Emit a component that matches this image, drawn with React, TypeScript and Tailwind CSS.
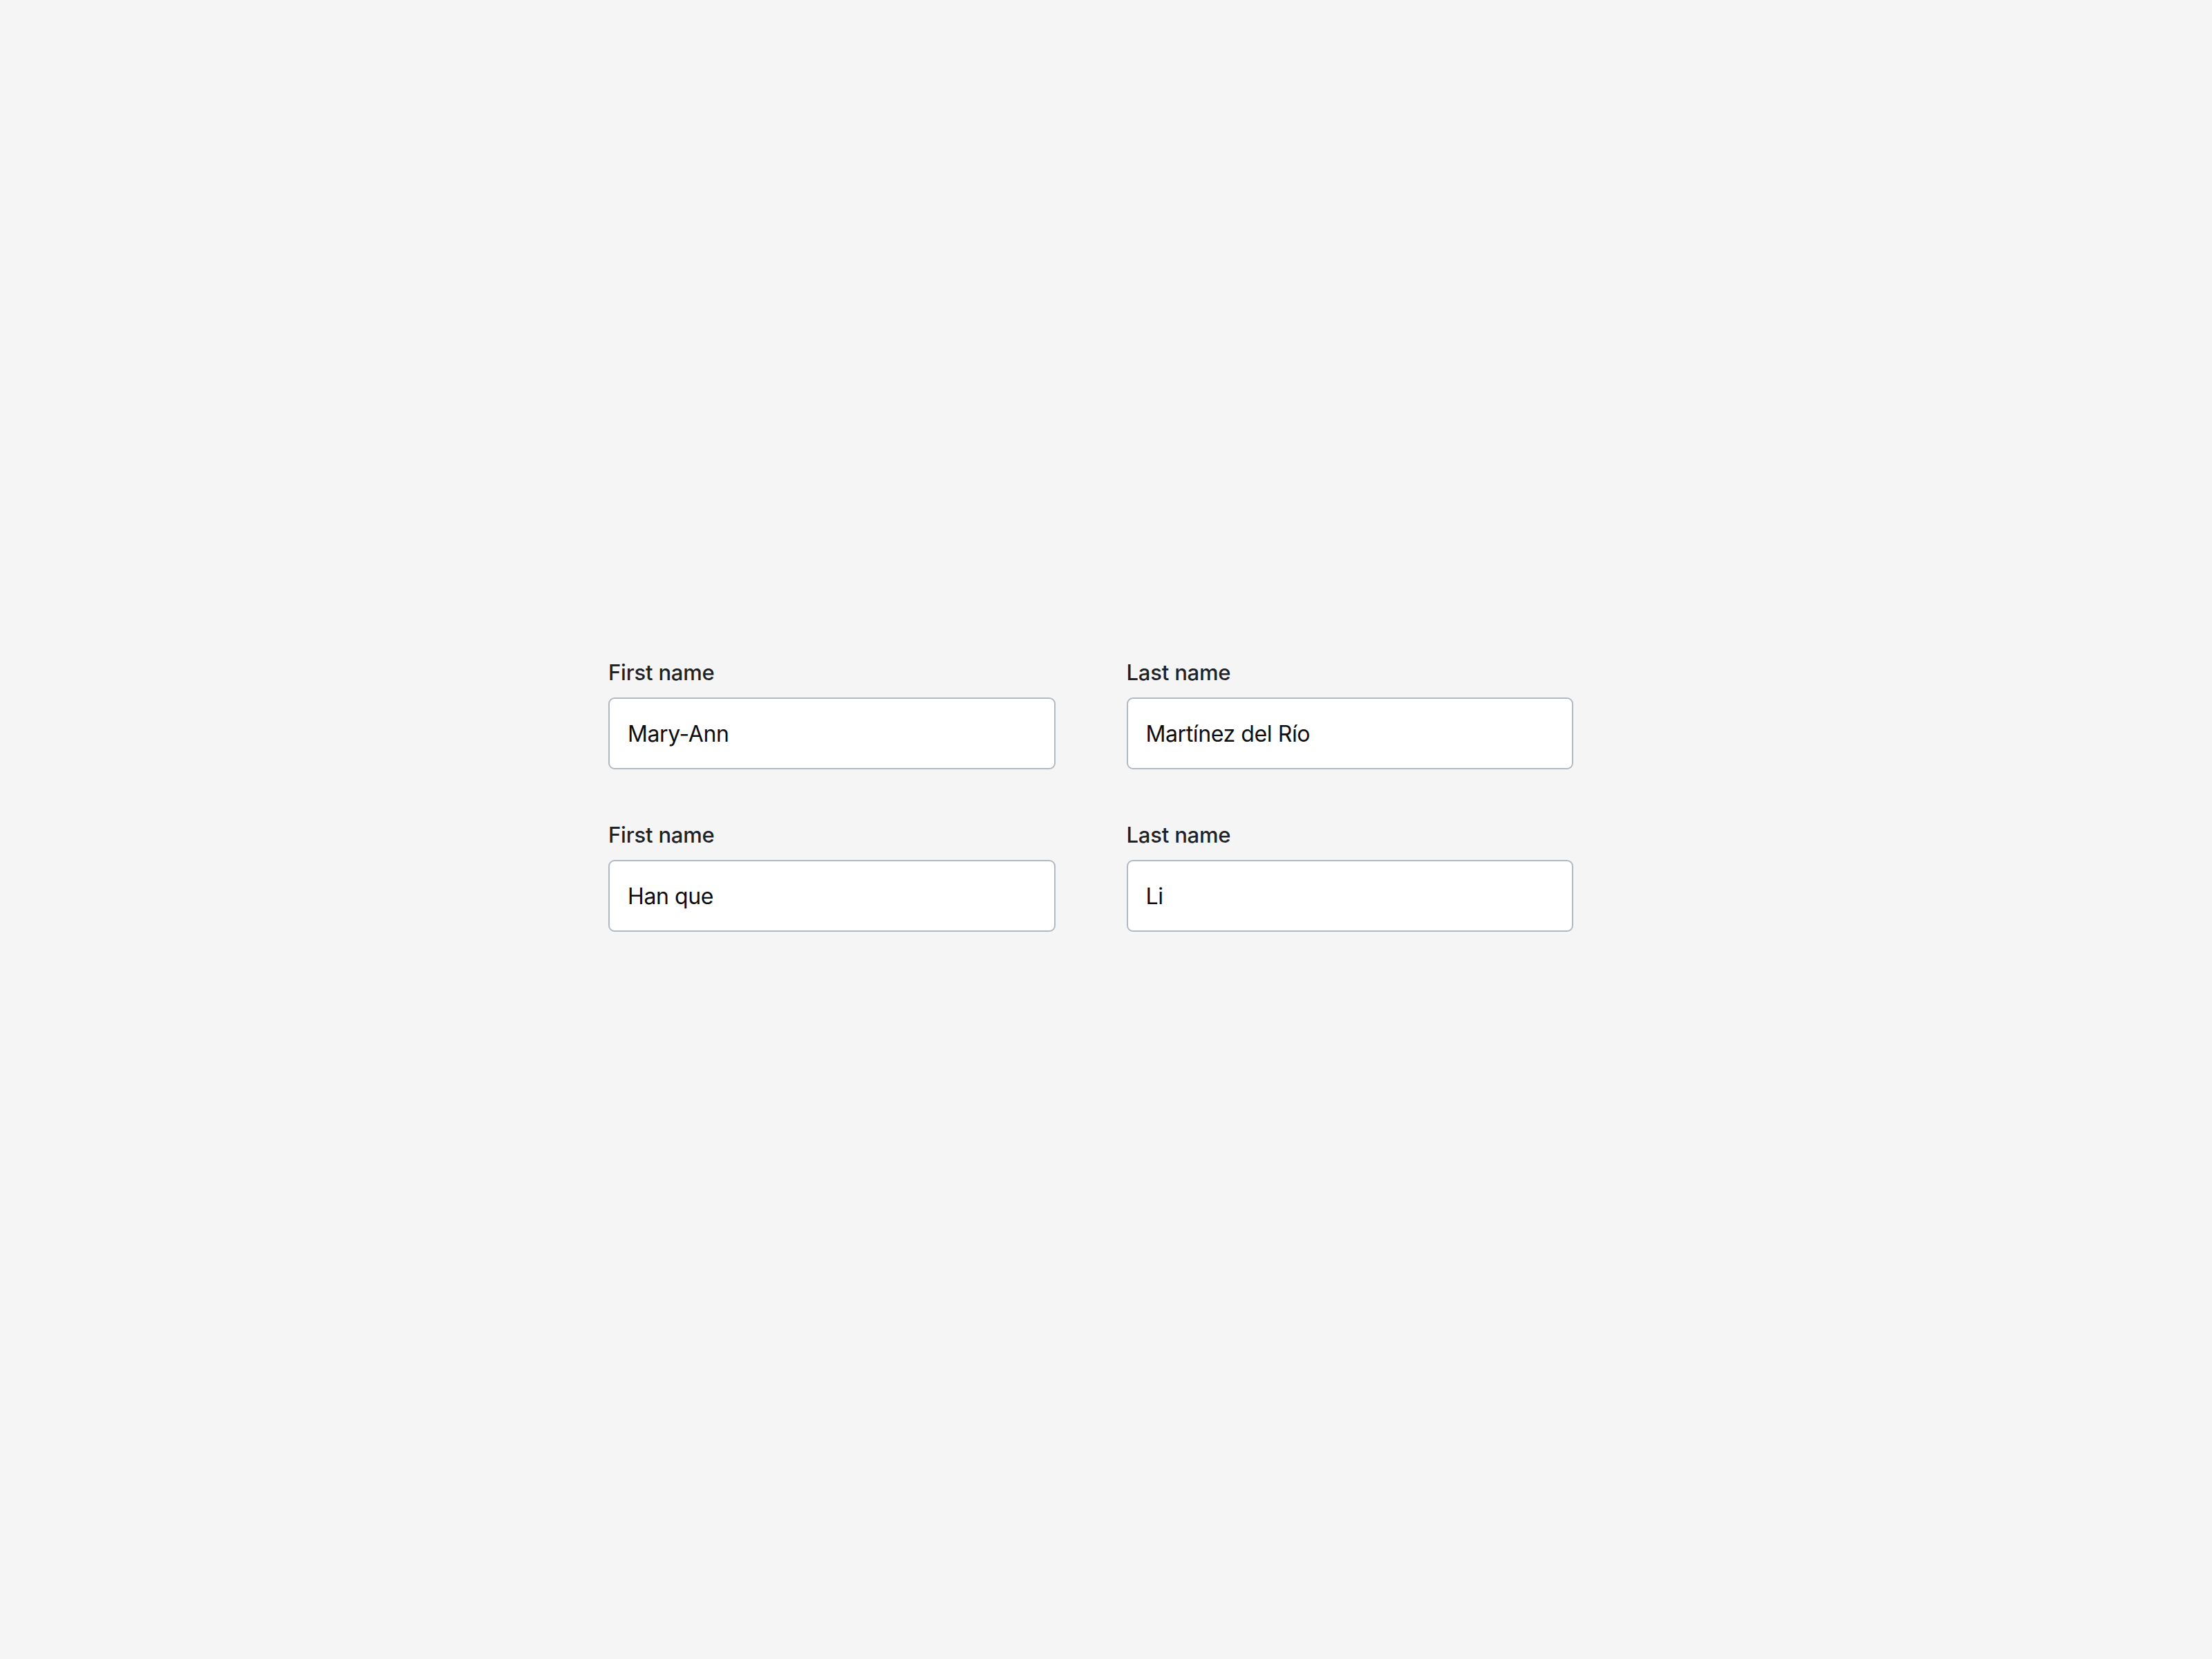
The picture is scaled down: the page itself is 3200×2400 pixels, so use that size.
import React from "react";

const rows = [
  { first: "Mary-Ann", last: "Martínez del Río" },
  { first: "Han que", last: "Li" },
];

function Field({ label, value }: { label: string; value: string }) {
  return (
    <label className="flex flex-col gap-[16px]">
      <span className="text-[31px] leading-[40px] font-medium tracking-[-0.2px] text-[#1f2328]">{label}</span>
      <input
        readOnly
        value={value}
        className="h-[104px] w-full rounded-[9px] border-2 border-[#b2b9c1] bg-white px-[26px] text-[32px] tracking-[-0.4px] text-[#0d0d0d] outline-none"
        style={{ fontFamily: "Inter, 'Noto Sans', sans-serif" }}
      />
    </label>
  );
}

export default function App() {
  return (
    <div
      className="min-h-[2400px] w-full bg-[#f5f5f5] pt-[953px] pl-[880px]"
      style={{ fontFamily: "Inter, 'Noto Sans', sans-serif" }}
    >
      <div className="grid w-[1396px] grid-cols-2 gap-x-[103px] gap-y-[75px]">
        {rows.map((r, i) => (
          <React.Fragment key={i}>
            <Field label="First name" value={r.first} />
            <Field label="Last name" value={r.last} />
          </React.Fragment>
        ))}
      </div>
    </div>
  );
}
